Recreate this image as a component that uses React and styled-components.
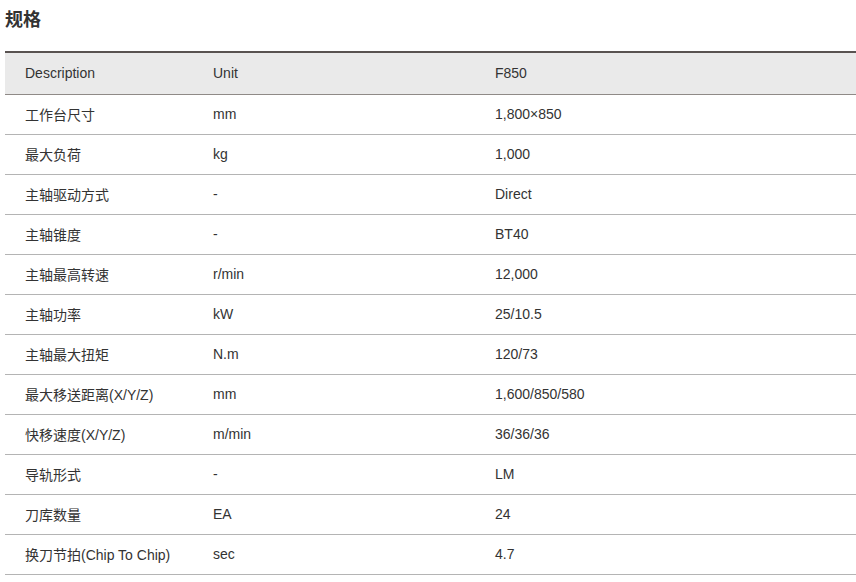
import React from "react";
import styled, { createGlobalStyle } from "styled-components";

const Global = createGlobalStyle`
  html, body { margin: 0; padding: 0; background: #fff; }
  body { font-family: "Liberation Sans", Arial, "Noto Sans CJK SC", sans-serif; color: #333; }
`;

const Page = styled.div`
  padding: 0 0 0 5px;
`;

const Title = styled.h2`
  margin: 0;
  padding-top: 9px;
  height: 51px;
  box-sizing: border-box;
  font-size: 18px;
  line-height: 22px;
  font-weight: bold;
  color: #333;
`;

const Table = styled.table`
  width: 100%;
  border-collapse: collapse;
  border-top: 2px solid #595351;
  font-size: 14px;
  table-layout: fixed;
`;

const Col = styled.col`
  width: ${(p) => p.$w || "auto"};
`;

const Th = styled.th`
  box-sizing: border-box;
  background: #eaeaea;
  height: 42px;
  padding: 0 0 0 20px;
  text-align: left;
  font-weight: normal;
  color: #333;
  border-bottom: 1px solid #8f8a87;
`;

const Td = styled.td`
  height: 39px;
  padding: 0 0 0 20px;
  text-align: left;
  color: #333;
  border-bottom: 1px solid #b4b4b4;
`;

const rows = [
  ["工作台尺寸", "mm", "1,800×850"],
  ["最大负荷", "kg", "1,000"],
  ["主轴驱动方式", "-", "Direct"],
  ["主轴锥度", "-", "BT40"],
  ["主轴最高转速", "r/min", "12,000"],
  ["主轴功率", "kW", "25/10.5"],
  ["主轴最大扭矩", "N.m", "120/73"],
  ["最大移送距离(X/Y/Z)", "mm", "1,600/850/580"],
  ["快移速度(X/Y/Z)", "m/min", "36/36/36"],
  ["导轨形式", "-", "LM"],
  ["刀库数量", "EA", "24"],
  ["换刀节拍(Chip To Chip)", "sec", "4.7"],
];

export default function App() {
  return (
    <>
      <Global />
      <Page>
        <Title>规格</Title>
        <Table>
          <colgroup>
            <Col $w="188px" />
            <Col $w="282px" />
            <Col />
          </colgroup>
          <thead>
            <tr>
              <Th>Description</Th>
              <Th>Unit</Th>
              <Th>F850</Th>
            </tr>
          </thead>
          <tbody>
            {rows.map((r) => (
              <tr key={r[0]}>
                <Td>{r[0]}</Td>
                <Td>{r[1]}</Td>
                <Td>{r[2]}</Td>
              </tr>
            ))}
          </tbody>
        </Table>
      </Page>
    </>
  );
}
